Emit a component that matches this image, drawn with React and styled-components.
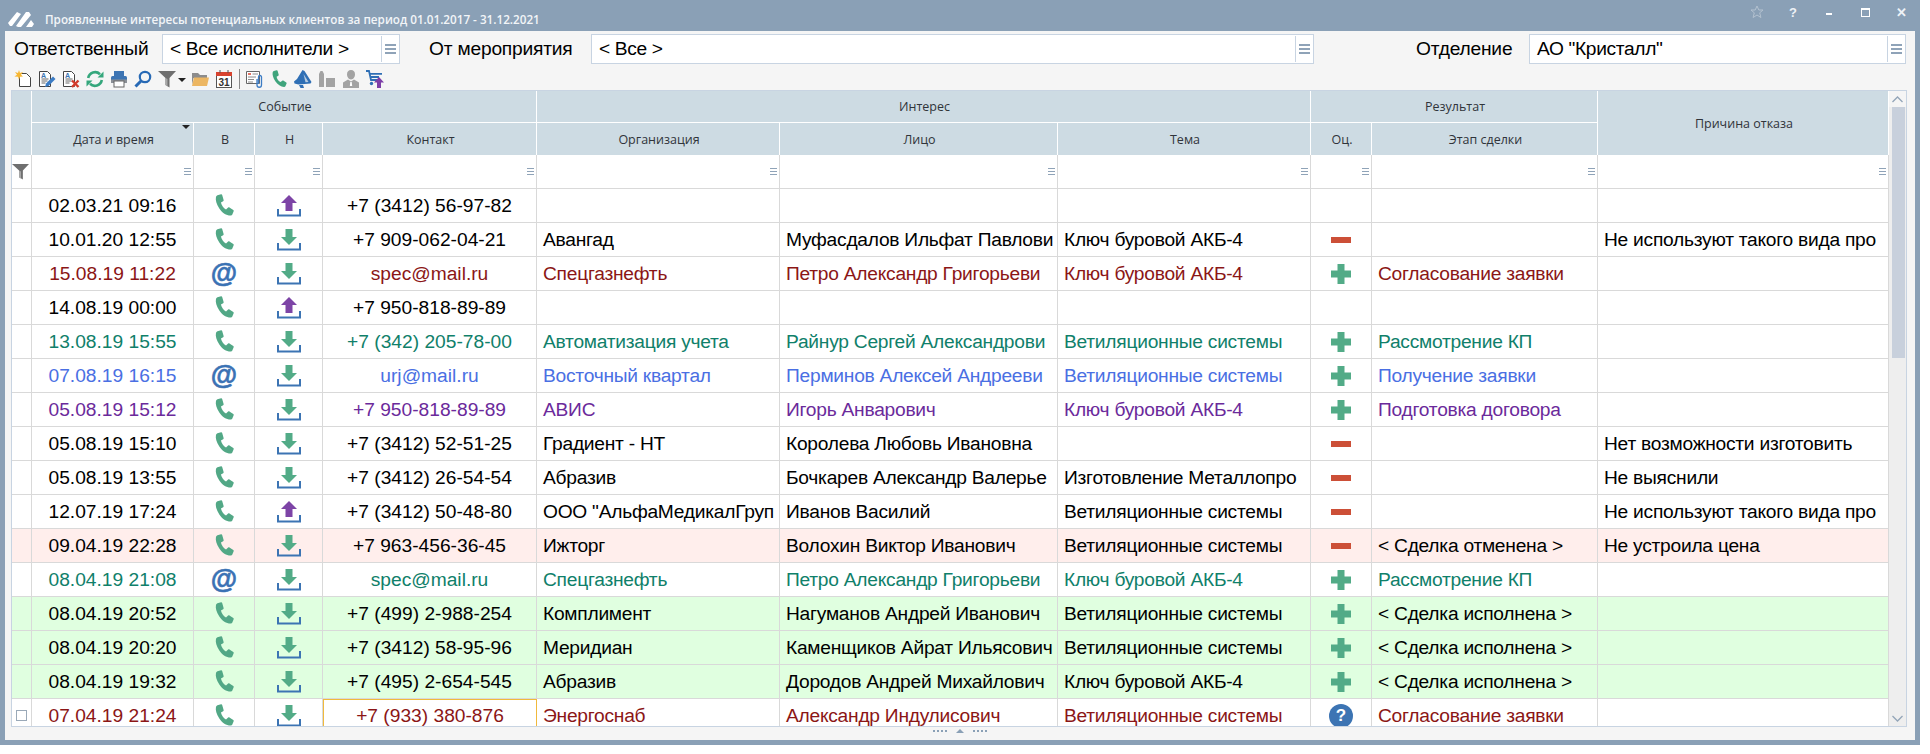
import React from "react";
import styled, { createGlobalStyle } from "styled-components";

const COLS = "20px 162px 61px 68px 214px 243px 278px 253px 61px 226px 291px";

const TEXT_COLORS = {
  red: "#8b1616",
  green: "#10806a",
  blue: "#4a6fe3",
  purple: "#6b2a9b",
};

const ROW_BG = {
  pink: "#ffeeec",
  mint: "#e0ffe0",
};

const rows = [
  { date: "02.03.21 09:16", via: "phone", dir: "up", contact: "+7 (3412) 56-97-82" },
  { date: "10.01.20 12:55", via: "phone", dir: "down", contact: "+7 909-062-04-21", org: "Авангад", person: "Муфасдалов Ильфат Павлови", topic: "Ключ буровой АКБ-4", mark: "minus", reason: "Не используют такого вида про" },
  { color: "red", date: "15.08.19 11:22", via: "at", dir: "down", contact: "spec@mail.ru", org: "Спецгазнефть", person: "Петро Александр Григорьеви", topic: "Ключ буровой АКБ-4", mark: "plus", stage: "Согласование заявки" },
  { date: "14.08.19 00:00", via: "phone", dir: "up", contact: "+7 950-818-89-89" },
  { color: "green", date: "13.08.19 15:55", via: "phone", dir: "down", contact: "+7 (342) 205-78-00", org: "Автоматизация учета", person: "Райнур Сергей Александрови", topic: "Ветиляционные системы", mark: "plus", stage: "Рассмотрение КП" },
  { color: "blue", date: "07.08.19 16:15", via: "at", dir: "down", contact: "urj@mail.ru", org: "Восточный квартал", person: "Перминов Алексей Андрееви", topic: "Ветиляционные системы", mark: "plus", stage: "Получение заявки" },
  { color: "purple", date: "05.08.19 15:12", via: "phone", dir: "down", contact: "+7 950-818-89-89", org: "АВИС", person: "Игорь Анварович", topic: "Ключ буровой АКБ-4", mark: "plus", stage: "Подготовка договора" },
  { date: "05.08.19 15:10", via: "phone", dir: "down", contact: "+7 (3412) 52-51-25", org: "Градиент - НТ", person: "Королева Любовь Ивановна", mark: "minus", reason: "Нет возможности изготовить" },
  { date: "05.08.19 13:55", via: "phone", dir: "down", contact: "+7 (3412) 26-54-54", org: "Абразив", person: "Бочкарев Александр Валерье", topic: "Изготовление Металлопро", mark: "minus", reason: "Не выяснили" },
  { date: "12.07.19 17:24", via: "phone", dir: "up", contact: "+7 (3412) 50-48-80", org: 'ООО "АльфаМедикалГруп', person: "Иванов Василий", topic: "Ветиляционные системы", mark: "minus", reason: "Не используют такого вида про" },
  { bg: "pink", date: "09.04.19 22:28", via: "phone", dir: "down", contact: "+7 963-456-36-45", org: "Ижторг", person: "Волохин Виктор Иванович", topic: "Ветиляционные системы", mark: "minus", stage: "< Сделка отменена >", reason: "Не устроила цена" },
  { color: "green", date: "08.04.19 21:08", via: "at", dir: "down", contact: "spec@mail.ru", org: "Спецгазнефть", person: "Петро Александр Григорьеви", topic: "Ключ буровой АКБ-4", mark: "plus", stage: "Рассмотрение КП" },
  { bg: "mint", date: "08.04.19 20:52", via: "phone", dir: "down", contact: "+7 (499) 2-988-254", org: "Комплимент", person: "Нагуманов Андрей Иванович", topic: "Ветиляционные системы", mark: "plus", stage: "< Сделка исполнена >" },
  { bg: "mint", date: "08.04.19 20:20", via: "phone", dir: "down", contact: "+7 (3412) 58-95-96", org: "Меридиан", person: "Каменщиков Айрат Ильясович", topic: "Ветиляционные системы", mark: "plus", stage: "< Сделка исполнена >" },
  { bg: "mint", date: "08.04.19 19:32", via: "phone", dir: "down", contact: "+7 (495) 2-654-545", org: "Абразив", person: "Дородов Андрей Михайлович", topic: "Ключ буровой АКБ-4", mark: "plus", stage: "< Сделка исполнена >" },
  { color: "red", current: true, date: "07.04.19 21:24", via: "phone", dir: "down", contact: "+7 (933) 380-876", org: "Энергоснаб", person: "Александр Индулисович", topic: "Ветиляционные системы", mark: "question", stage: "Согласование заявки" },
];

const PhoneShape = ({ fill = "#52a886" }) => (
  <path
    fill={fill}
    d="M4.6 1.2 8.4.2c.6-.1 1 .1 1.2.7l1.5 5.3c.1.6 0 1-.5 1.3L8.3 8.9c.6 3 2.6 5.8 5.3 7.2l2.2-1.9c.4-.3.9-.4 1.4-.1l4 2.7c.5.3.6.8.4 1.3l-1.4 3.2c-.4.8-1 1.2-2 1.2-4.2 0-8.6-2.8-11.6-7.4C3.6 10.500 2.400 6.300 3.100 3.100c.2-.9.700-1.600 1.500-1.900Z"
  />
);

const PhoneIcon = () => (
  <svg width="22" height="23" viewBox="0 0 23 24">
    <PhoneShape />
  </svg>
);

const TransferIcon = ({ dir }) => (
  <svg width="24" height="22" viewBox="0 0 24 22">
    <path d="M1 14v6.500h22V14" fill="none" stroke="#3c74b3" strokeWidth="2" />
    {dir === "up" ? (
      <path fill="#7d44a6" d="M12 0l8 8h-4.500v8h-7V8H4z" />
    ) : (
      <path fill="#52ab87" d="M8.500 0h7v8H20l-8 8-8-8h4.500z" />
    )}
  </svg>
);

const PlusIcon = () => (
  <svg width="20" height="20" viewBox="0 0 20 20">
    <path fill="#52ab87" d="M6.500 0h7v6.500H20v7h-6.500V20h-7v-6.500H0v-7h6.500z" />
  </svg>
);

const MinusIcon = () => (
  <svg width="20" height="6" viewBox="0 0 20 6">
    <rect width="20" height="6" fill="#cc4f37" />
  </svg>
);

const LogoIcon = () => (
  <svg width="26" height="16" viewBox="0 0 26 16">
    <path fill="#fff" d="M0 12 9 1 13 3 4 15 2 15zM8 15 18 1 21 1 23 4 13 16 10 16zM18 16l5-7 3 4-2 3z" />
  </svg>
);

const StarIcon = () => (
  <svg width="14" height="14" viewBox="0 0 14 14">
    <path fill="none" stroke="#b4c2d0" d="M7 1l1.800 4h4.200l-3.300 2.800 1.200 4.700L7 10l-3.900 2.500 1.200-4.700L1 5h4.200z" />
  </svg>
);

const NewDocIcon = () => (
  <svg width="18" height="18" viewBox="0 0 18 18">
    <path fill="#fff" stroke="#444" d="M5.500 3.500h7l4 4v9h-11z" />
    <path fill="#f7b733" d="M5 0l1 3 3-1-2 2.700L9 6.500l-3 .2-1 3-1-3-3.600-.2L3 4.700 1 2l3 1z" />
  </svg>
);

const DocLines = () => (
  <>
    <path fill="#fff" stroke="#444" d="M1.500 1.500h8l3 3v12h-11z" />
    <path stroke="#666" d="M3.500 9h7M3.500 11h6M3.500 13h4" />
    <text x="3" y="7.500" fontSize="7" fontWeight="700" fontFamily="Liberation Sans, sans-serif" fill="#3c74b3">A</text>
  </>
);

const EditDocIcon = () => (
  <svg width="18" height="18" viewBox="0 0 18 18">
    <DocLines />
    <path fill="#3c7cc4" d="M15 6.500l2.500 2.500-7 7-3.500 1 1-3.500z" />
  </svg>
);

const DeleteDocIcon = () => (
  <svg width="18" height="18" viewBox="0 0 18 18">
    <DocLines />
    <path stroke="#d23b2a" strokeWidth="2.400" d="M10 10.500l6.500 6.500M16.500 10.500L10 17" />
  </svg>
);

const RefreshIcon = () => (
  <svg width="18" height="18" viewBox="0 0 18 18">
    <path fill="none" stroke="#35a77c" strokeWidth="2.600" d="M2.200 8A7 7 0 0 1 14 4.200M15.800 10A7 7 0 0 1 4 13.800" />
    <path fill="#35a77c" d="M17.500 1.500v6h-6zM.5 16.500v-6h6z" />
  </svg>
);

const PrintIcon = () => (
  <svg width="18" height="18" viewBox="0 0 18 18">
    <rect x="4" y="1" width="10" height="5" fill="#3c74b3" />
    <rect x="1" y="6" width="16" height="7" rx="1.500" fill="#3c74b3" />
    <rect x="1" y="9.500" width="16" height="3.500" fill="#8a8f96" />
    <rect x="4" y="11" width="10" height="6" fill="#fff" stroke="#666" />
  </svg>
);

const SearchIcon = () => (
  <svg width="18" height="18" viewBox="0 0 18 18">
    <circle cx="11" cy="7" r="5.200" fill="none" stroke="#2769b5" strokeWidth="2.200" />
    <path stroke="#2769b5" strokeWidth="3" d="M7 11l-5.500 5.500" />
  </svg>
);

const FunnelIcon = ({ size = 18 }) => (
  <svg width={size} height={size} viewBox="0 0 18 18">
    <path fill="#6f6f6f" d="M0 1h18l-6.500 7v9.500L7.500 15V8z" />
    <path fill="#a8a8a8" d="M7.500 8l2 1v7.500l-2-1.500z" />
  </svg>
);

const FolderIcon = () => (
  <svg width="18" height="18" viewBox="0 0 18 18">
    <path fill="#8c8c8c" d="M1 3h6l2 2h7v3H2.500L1 15z" />
    <path fill="#ecb662" d="M3 7.500h15L16 16H1z" />
  </svg>
);

const CalendarIcon = () => (
  <svg width="18" height="18" viewBox="0 0 18 18">
    <rect x="1.500" y="2.500" width="15" height="15" fill="#fff" stroke="#555" />
    <rect x="1" y="2" width="16" height="4" fill="#d8432f" />
    <path stroke="#555" d="M5 0v3M13 0v3" />
    <text x="9" y="15.500" textAnchor="middle" fontSize="10" fontWeight="700" fontFamily="Liberation Sans, sans-serif" fill="#333">31</text>
  </svg>
);

const CardIcon = () => (
  <svg width="18" height="18" viewBox="0 0 18 18">
    <path fill="#fff" stroke="#666" d="M.5 1.500h13v12H.5z" />
    <path stroke="#d8432f" strokeWidth="1.500" d="M2 4h3" />
    <path stroke="#8a8a8a" d="M6.500 4H12M2 7h8M2 9.500h6M2 12h5" />
    <path fill="none" stroke="#3c7cc4" strokeWidth="1.300" d="M11 9v6a2 2 0 0 0 4.500 0V7a1.500 1.500 0 0 0-3 0v7" />
  </svg>
);

const SmallPhoneIcon = () => (
  <svg width="18" height="18" viewBox="0 0 23 24">
    <PhoneShape fill="#3fa47c" />
  </svg>
);

const MegaphoneIcon = () => (
  <svg width="18" height="18" viewBox="0 0 18 18">
    <path fill="#2f6fb5" d="M8.500 0l2 1 7 11-1 1.500-12 1L.5 13.500 0 11.500 3 9z" />
    <path fill="#b9cde2" d="M9.500 4l5 8-3 .3z" />
    <path fill="#2f6fb5" d="M5 15h4l1 3H6.500z" />
  </svg>
);

const FactoryIcon = () => (
  <svg width="18" height="18" viewBox="0 0 18 18">
    <path fill="#a3a3a3" d="M1 17V4l1.500-3h2L6 4v13z" />
    <rect x="8" y="8" width="9" height="9" fill="#a3a3a3" />
  </svg>
);

const PersonIcon = () => (
  <svg width="18" height="18" viewBox="0 0 18 18">
    <path fill="#a3a3a3" d="M9 0c2.500 0 4 1.800 4 4.300C13 7 11.500 9.500 9 9.500S5 7 5 4.300C5 1.800 6.500 0 9 0z" />
    <path fill="#a3a3a3" d="M6 9.500l3 2 3-2 5 3V18H1v-5.500z" />
    <path fill="#fff" d="M8.300 12h1.400l.5 4H7.800z" />
  </svg>
);

const CartIcon = () => (
  <svg width="18" height="18" viewBox="0 0 18 18">
    <path fill="none" stroke="#2f6fb5" strokeWidth="1.800" d="M0 1h3l2 9h6M3 3.800h13M4 7h9" />
    <circle cx="5.500" cy="13.500" r="1.700" fill="#2f6fb5" />
    <path fill="#7d3fa8" d="M13 7l5 5.500h-3V18h-4v-5.500H8z" />
  </svg>
);

const ChevronIcon = ({ down }) => (
  <svg width="11" height="7" viewBox="0 0 11 7">
    <path fill="none" stroke="#93a5b8" strokeWidth="1.300" d={down ? "M.5 1l5 5 5-5" : "M.5 6l5-5 5 5"} />
  </svg>
);

const GlobalStyle = createGlobalStyle`
  html, body {
    margin: 0;
    padding: 0;
    background: #fff;
  }
  * {
    box-sizing: border-box;
  }
`;

const Window = styled.div`
  width: 1920px;
  height: 745px;
  display: flex;
  flex-direction: column;
  background: #8aa0b6;
  font-family: "Liberation Sans", Arial, sans-serif;
  overflow: hidden;
`;

const TitleBar = styled.div`
  height: 31px;
  flex: none;
  display: flex;
  align-items: center;
  padding: 7px 1px 0 8px;
`;

const WindowTitle = styled.span`
  margin-left: 11px;
  flex: 1;
  color: #f2f5f8;
  font: 600 11.7px "Open Sans", sans-serif;
  white-space: nowrap;
`;

const WindowControls = styled.div`
  display: flex;
  margin-top: -7px;
  align-self: flex-start;
`;

const WindowControl = styled.span`
  width: 36px;
  height: 24px;
  display: flex;
  align-items: center;
  justify-content: center;
  color: #eef2f6;
  font: 700 13px "Liberation Sans", sans-serif;
`;

const MinimizeGlyph = styled.span`
  width: 6px;
  height: 2px;
  margin-top: 4px;
  background: #fff;
`;

const MaximizeGlyph = styled.span`
  width: 9px;
  height: 9px;
  border: 1px solid #fff;
  border-top-width: 2px;
`;

const Content = styled.div`
  flex: 1;
  min-height: 0;
  margin: 0 5px 5px;
  display: flex;
  flex-direction: column;
  background: #f5f5f5;
`;

const FilterBar = styled.div`
  flex: none;
  height: 33px;
  padding-top: 3px;
  display: flex;
`;

const FilterLabel = styled.label`
  width: ${({ $width }) => $width}px;
  padding-left: ${({ $indent }) => $indent}px;
  line-height: 29px;
  font-size: 19.2px;
  letter-spacing: -0.2px;
  color: #000;
  white-space: nowrap;
`;

const Field = styled.div`
  width: ${({ $width }) => $width}px;
  height: 30px;
  display: flex;
  background: #fff;
  border: 1px solid #c8d4e2;
`;

const FieldValue = styled.div`
  flex: 1;
  padding-left: 7px;
  line-height: 27px;
  font-size: 19.2px;
  letter-spacing: -0.35px;
  color: #000;
`;

const FieldButton = styled.div`
  width: 18px;
  margin: 1px 0;
  display: flex;
  align-items: center;
  justify-content: center;
  border-left: 1px solid #c8d4e2;
`;

const MenuBars = styled.span`
  display: block;
  width: ${({ $small }) => ($small ? 7 : 11)}px;
  height: ${({ $small }) => ($small ? 7 : 10)}px;
  border-top: ${({ $small }) => ($small ? 1 : 2)}px solid #8fa3b8;
  border-bottom: ${({ $small }) => ($small ? 1 : 2)}px solid #8fa3b8;
  position: relative;

  &::after {
    content: "";
    position: absolute;
    left: 0;
    right: 0;
    top: 2px;
    height: ${({ $small }) => ($small ? 1 : 2)}px;
    background: #8fa3b8;
  }
`;

const Toolbar = styled.div`
  flex: none;
  height: 26px;
  padding: 6px 0 0 9px;
  display: flex;
  align-items: flex-start;
  gap: 6px;
`;

const DropArrow = styled.span`
  width: 0;
  height: 0;
  margin: 8px -1px 0 -4px;
  border-left: 4px solid transparent;
  border-right: 4px solid transparent;
  border-top: 4px solid #222;
`;

const ToolbarDivider = styled.span`
  width: 1px;
  height: 20px;
  margin-top: -1px;
  background: #8a8a8a;
`;

const TableBox = styled.div`
  flex: 1;
  min-height: 0;
  margin: 0 8px 0 6px;
  display: flex;
  border: 1px solid #c8d4e2;
  background: #fff;
`;

const GridArea = styled.div`
  width: 1877px;
  display: flex;
  flex-direction: column;
  overflow: hidden;
`;

const HeaderGrid = styled.div`
  flex: none;
  display: grid;
  grid-template-columns: ${COLS};
  grid-template-rows: 32px 32px;
  background: #cddbe3;
`;

const HeaderCell = styled.div`
  grid-column: ${({ $col }) => $col};
  grid-row: ${({ $row }) => $row};
  display: flex;
  align-items: center;
  justify-content: center;
  position: relative;
  padding-left: 2px;
  border-right: 1px solid #fff;
  border-bottom: ${({ $line }) => ($line ? "1px solid #fff" : "none")};
  font: 12.5px "Open Sans", sans-serif;
  color: #30343a;
`;

const SortMark = styled.span`
  position: absolute;
  top: 2px;
  right: 3px;
  width: 0;
  height: 0;
  border-left: 4px solid transparent;
  border-right: 4px solid transparent;
  border-top: 4px solid #222;
`;

const Row = styled.div`
  flex: none;
  height: 34px;
  display: grid;
  grid-template-columns: ${COLS};
  border-bottom: 1px solid #d9d9d9;
  background: ${({ $bg }) => ROW_BG[$bg] || "#fff"};
  color: ${({ $color }) => TEXT_COLORS[$color] || "#000"};
  font-size: 19.2px;
`;

const Cell = styled.div`
  min-width: 0;
  display: flex;
  align-items: center;
  justify-content: ${({ $center }) => ($center ? "center" : "flex-start")};
  padding: ${({ $center }) => ($center ? "0" : "0 6px")};
  letter-spacing: ${({ $center }) => ($center ? "0" : "-0.25px")};
  border-right: 1px solid #d9d9d9;
  white-space: nowrap;
  overflow: hidden;
`;

const CurrentCell = styled(Cell)`
  border: 1px solid #f0b93c;
  border-bottom: 0;
`;

const FilterCell = styled(Cell)`
  justify-content: flex-end;
  padding: 0 2px 0 0;
`;

const MarkerCell = styled(Cell)`
  padding: 0;
  justify-content: center;
`;

const FunnelCell = styled(MarkerCell)`
  justify-content: flex-start;
`;

const CheckBox = styled.span`
  width: 11px;
  height: 11px;
  margin-top: -1px;
  border: 1px solid #9aa9b8;
  background: #fff;
`;

const AtSign = styled.span`
  font: 700 27px/1 "Liberation Sans", sans-serif;
  -webkit-text-stroke: 0.6px #3a72b4;
  color: #3a72b4;
`;

const QuestionBadge = styled.span`
  width: 24px;
  height: 24px;
  flex: none;
  display: flex;
  align-items: center;
  justify-content: center;
  border-radius: 50%;
  background: #3c74b3;
  color: #fff;
  font: 700 17px "Liberation Sans", sans-serif;
`;

const ScrollBar = styled.div`
  width: 17px;
  display: flex;
  flex-direction: column;
  background: #eeeeee;
`;

const ScrollButton = styled.div`
  flex: none;
  height: 16px;
  display: flex;
  align-items: center;
  justify-content: center;
  background: ${({ $light }) => ($light ? "#f5f5f5" : "transparent")};
`;

const ScrollThumb = styled.div`
  flex: none;
  height: 251px;
  margin: 0 1px 0 3px;
  background: #c8d0dc;
`;

const ScrollRest = styled.div`
  flex: 1;
`;

const Splitter = styled.div`
  flex: none;
  height: 13px;
  display: flex;
  align-items: center;
  justify-content: center;
  gap: 9px;
  padding-bottom: 5px;
`;

const SplitterDots = styled.span`
  width: 14px;
  height: 2px;
  background: repeating-linear-gradient(90deg, #8aa0b6 0 2px, transparent 2px 4px);
`;

const SplitterArrow = styled.span`
  width: 0;
  height: 0;
  border-left: 4px solid transparent;
  border-right: 4px solid transparent;
  border-bottom: 4px solid #8aa0b6;
`;

const viaIcon = (via) => (via === "at" ? <AtSign>@</AtSign> : <PhoneIcon />);

const markIcon = (mark) => {
  if (mark === "plus") return <PlusIcon />;
  if (mark === "minus") return <MinusIcon />;
  if (mark === "question") return <QuestionBadge>?</QuestionBadge>;
  return null;
};

const DataRow = ({ row }) => {
  const ContactCell = row.current ? CurrentCell : Cell;
  return (
    <Row $color={row.color} $bg={row.bg}>
      <MarkerCell>{row.current && <CheckBox />}</MarkerCell>
      <Cell $center>{row.date}</Cell>
      <Cell $center>{viaIcon(row.via)}</Cell>
      <Cell $center>
        <TransferIcon dir={row.dir} />
      </Cell>
      <ContactCell $center>{row.contact}</ContactCell>
      <Cell>{row.org}</Cell>
      <Cell>{row.person}</Cell>
      <Cell>{row.topic}</Cell>
      <Cell $center>{markIcon(row.mark)}</Cell>
      <Cell>{row.stage}</Cell>
      <Cell>{row.reason}</Cell>
    </Row>
  );
};

const App = () => {
  return (
    <>
      <GlobalStyle />
      <Window>
        <TitleBar>
          <LogoIcon />
          <WindowTitle>Проявленные интересы потенциальных клиентов за период 01.01.2017 - 31.12.2021</WindowTitle>
          <WindowControls>
            <WindowControl>
              <StarIcon />
            </WindowControl>
            <WindowControl>?</WindowControl>
            <WindowControl>
              <MinimizeGlyph />
            </WindowControl>
            <WindowControl>
              <MaximizeGlyph />
            </WindowControl>
            <WindowControl>✕</WindowControl>
          </WindowControls>
        </TitleBar>
        <Content>
          <FilterBar>
            <FilterLabel $width={157} $indent={9}>
              Ответственный
            </FilterLabel>
            <Field $width={238}>
              <FieldValue>{"< Все исполнители >"}</FieldValue>
              <FieldButton>
                <MenuBars />
              </FieldButton>
            </Field>
            <FilterLabel $width={191} $indent={29}>
              От мероприятия
            </FilterLabel>
            <Field $width={723}>
              <FieldValue>{"< Все >"}</FieldValue>
              <FieldButton>
                <MenuBars />
              </FieldButton>
            </Field>
            <FilterLabel $width={215} $indent={102}>
              Отделение
            </FilterLabel>
            <Field $width={377}>
              <FieldValue>АО "Кристалл"</FieldValue>
              <FieldButton>
                <MenuBars />
              </FieldButton>
            </Field>
          </FilterBar>
          <Toolbar>
            <NewDocIcon />
            <EditDocIcon />
            <DeleteDocIcon />
            <RefreshIcon />
            <PrintIcon />
            <SearchIcon />
            <FunnelIcon />
            <DropArrow />
            <FolderIcon />
            <CalendarIcon />
            <ToolbarDivider />
            <CardIcon />
            <SmallPhoneIcon />
            <MegaphoneIcon />
            <FactoryIcon />
            <PersonIcon />
            <CartIcon />
          </Toolbar>
          <TableBox>
            <GridArea>
              <HeaderGrid>
                <HeaderCell $col="1" $row="1 / 3" />
                <HeaderCell $col="2 / 6" $row="1" $line>
                  Событие
                </HeaderCell>
                <HeaderCell $col="6 / 9" $row="1" $line>
                  Интерес
                </HeaderCell>
                <HeaderCell $col="9 / 11" $row="1" $line>
                  Результат
                </HeaderCell>
                <HeaderCell $col="11" $row="1 / 3">
                  Причина отказа
                </HeaderCell>
                <HeaderCell $col="2" $row="2">
                  Дата и время
                  <SortMark />
                </HeaderCell>
                <HeaderCell $col="3" $row="2">
                  В
                </HeaderCell>
                <HeaderCell $col="4" $row="2">
                  Н
                </HeaderCell>
                <HeaderCell $col="5" $row="2">
                  Контакт
                </HeaderCell>
                <HeaderCell $col="6" $row="2">
                  Организация
                </HeaderCell>
                <HeaderCell $col="7" $row="2">
                  Лицо
                </HeaderCell>
                <HeaderCell $col="8" $row="2">
                  Тема
                </HeaderCell>
                <HeaderCell $col="9" $row="2">
                  Оц.
                </HeaderCell>
                <HeaderCell $col="10" $row="2">
                  Этап сделки
                </HeaderCell>
              </HeaderGrid>
              <Row>
                <FunnelCell>
                  <FunnelIcon size={17} />
                </FunnelCell>
                {Array.from({ length: 10 }, (_, i) => (
                  <FilterCell key={i}>
                    <MenuBars $small />
                  </FilterCell>
                ))}
              </Row>
              {rows.map((row) => (
                <DataRow key={row.date} row={row} />
              ))}
            </GridArea>
            <ScrollBar>
              <ScrollButton $light>
                <ChevronIcon />
              </ScrollButton>
              <ScrollThumb />
              <ScrollRest />
              <ScrollButton>
                <ChevronIcon down />
              </ScrollButton>
            </ScrollBar>
          </TableBox>
          <Splitter>
            <SplitterDots />
            <SplitterArrow />
            <SplitterDots />
          </Splitter>
        </Content>
      </Window>
    </>
  );
};

export default App;
